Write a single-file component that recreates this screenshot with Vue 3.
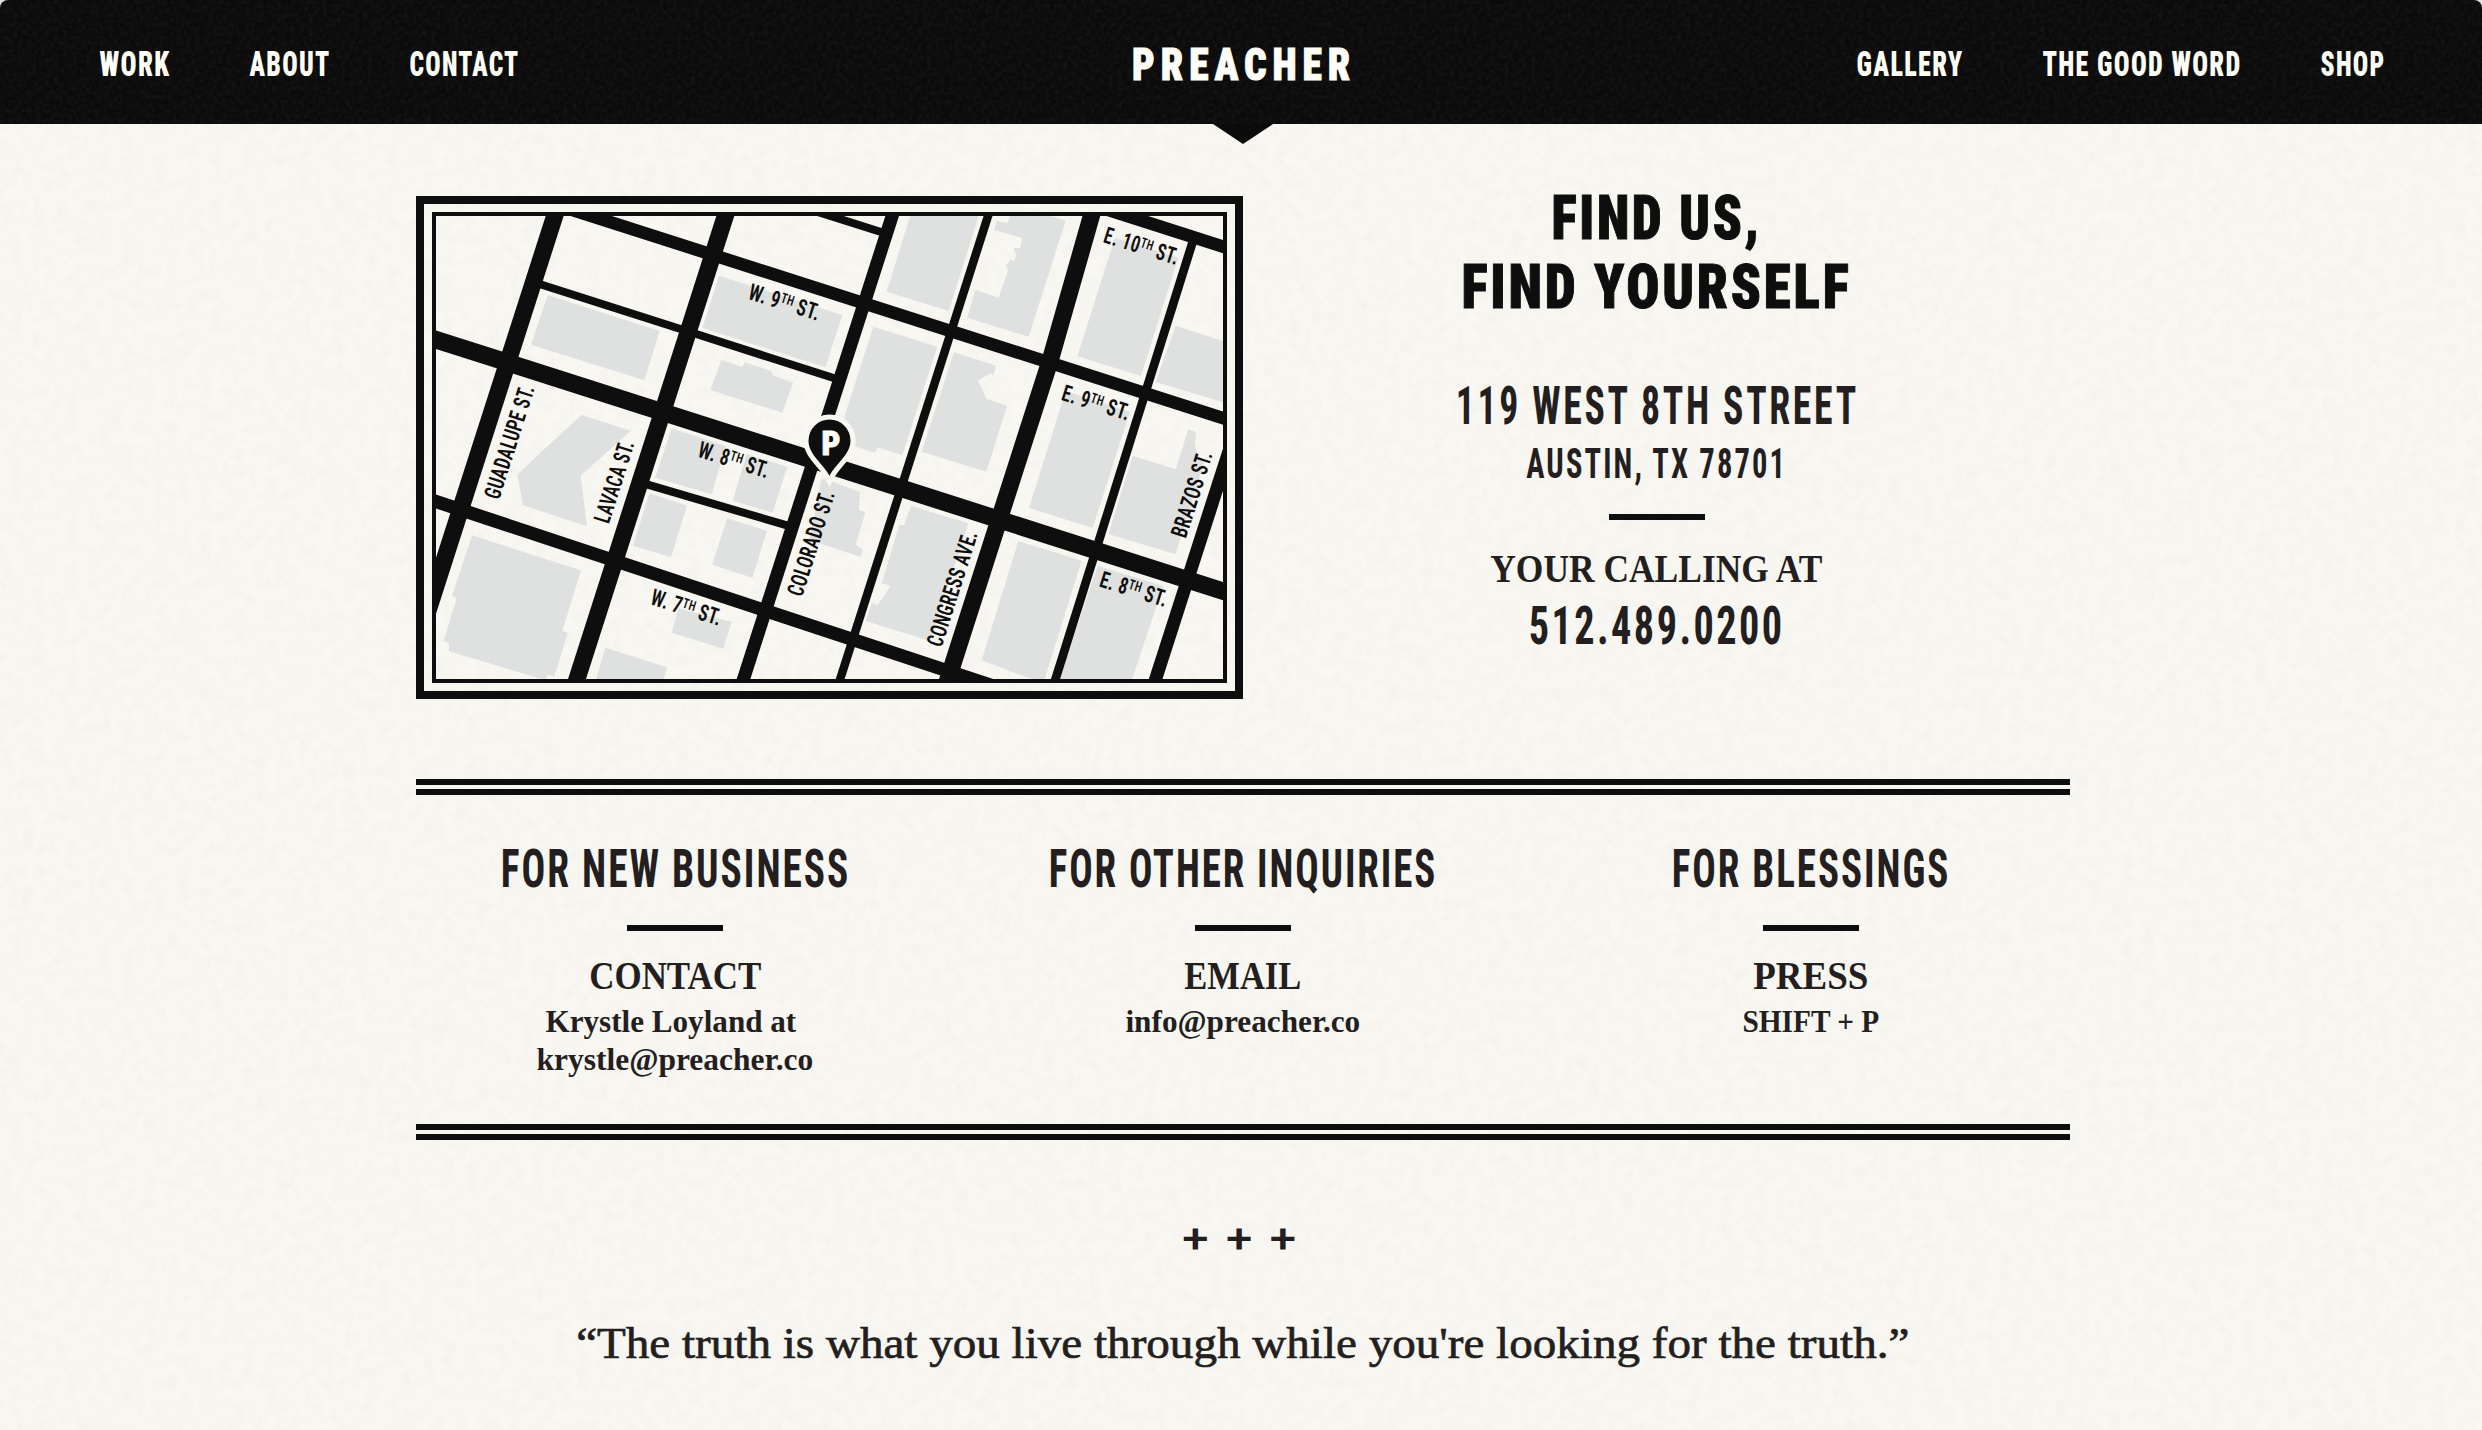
<script setup>
import { h } from 'vue'

// Cap height as a share of the font size, per typeface.
const CAP_RATIO = { cond: 0.711, slab: 0.711, serif: 0.655 }

// One line of type set to an exact measure: `w` wide, `cap` tall.
const TypeLine = ({ text, w, cap, face = 'cond', ls = 0.07 }) => {
  const size = cap / CAP_RATIO[face]
  const bearing = cap * (face === 'serif' ? 0.03 : 0.06)
  return h('svg', { class: ['line', face], width: w, height: cap }, [
    h('text', {
      x: -bearing,
      y: cap,
      'font-size': size,
      'letter-spacing': `${ls}em`,
      textLength: w + bearing * 1.4 + size * ls * 0.5,
      lengthAdjust: 'spacingAndGlyphs',
      'xml:space': 'preserve'
    }, text)
  ])
}
TypeLine.props = ['text', 'w', 'cap', 'face', 'ls']

const navLeft = [
  { text: 'WORK', w: 68 },
  { text: 'ABOUT', w: 78 },
  { text: 'CONTACT', w: 107 }
]
const navRight = [
  { text: 'GALLERY', w: 104 },
  { text: 'THE GOOD WORD', w: 196 },
  { text: 'SHOP', w: 62 }
]

const columns = [
  {
    title: 'FOR NEW BUSINESS', w: 345, label: 'CONTACT', lw: 171,
    lines: [{ text: 'Krystle Loyland at', w: 250, class: 'hang' }, { text: 'krystle@preacher.co', w: 276 }]
  },
  {
    title: 'FOR OTHER INQUIRIES', w: 384, label: 'EMAIL', lw: 116,
    lines: [{ text: 'info@preacher.co', w: 234 }]
  },
  {
    title: 'FOR BLESSINGS', w: 274, label: 'PRESS', lw: 114,
    lines: [{ text: 'SHIFT + P', w: 136 }]
  }
]

const streets = [
  { d: 'M564.3 186L426 617', w: 17.1 },
  { d: 'M734.9 186L567.4 709', w: 17.1 },
  { d: 'M901.8 186L733.9 709', w: 13 },
  { d: 'M997.6 186L830.6 709', w: 8.5 },
  { d: 'M1099.9 186L1050.3 360L938.4 709', w: 17.1 },
  { d: 'M1194.2 237L1046.1 709', w: 8.7 },
  { d: 'M1239.6 418L1146 709', w: 13 },
  { d: 'M406 330.1L1253 600.7', w: 17.6 },
  { d: 'M560 206L1253 427.8', w: 12.6 },
  { d: 'M406 491.6L1022 695.5', w: 13.2 },
  { d: 'M1096 206L1253 256.2', w: 12.7 },
  { d: 'M541 284.5L697 334.3L836 378.8', w: 8 },
  { d: 'M799 206L881 232', w: 8 },
  { d: 'M646 484.2L787 525.4', w: 8 }
]

// Building footprints by map quadrant, drawn at three units to the pixel.
const quadrants = [
  {
    at: 'translate(410 190) scale(.33333)',
    blocks: [
      '413,315 749,423 703,571 363,464',
      '927,257 1297,375 1246,532 877,414',
      '934,511 997,530 1004,517 1085,543 1088,556 1149,579 1117,668 901,600'
    ]
  },
  {
    at: 'translate(830 190) scale(.33333)',
    blocks: [
      '243,70 449,70 356,363 170,305',
      '540,78 533,98 500,92 493,120 577,145 570,175 552,174 552,186 560,190 553,214 542,209 528,226 534,243 506,323 437,299 411,383 596,440 707,92 650,74',
      '855,143 1045,203 933,558 742,499',
      '1037,407 1180,453 1180,637 977,576',
      '130,410 322,470 217,796 143,772 135,788 78,770 60,720 42,683',
      '372,486 498,527 490,557 481,550 444,572 469,626 531,647 469,845 275,785',
      '707,603 900,665 788,1014 597,954'
    ]
  },
  {
    at: 'translate(410 440) scale(.33333)',
    blocks: [
      '515,-75 662,-28 512,107 531,259 339,196 322,104 400,30',
      '785,-35 947,18 905,163 735,113',
      '1010,42 1132,80 1088,218 968,182',
      '718,160 831,197 783,352 669,317',
      '951,235 1071,272 1027,413 907,374',
      '186,286 513,391 457,572 473,580 433,710 415,705 405,720 117,634 117,610 101,603 140,474 126,467',
      '805,505 965,545 940,626 785,578',
      '586,623 772,682 757,730 554,730'
    ]
  },
  {
    at: 'translate(830 440) scale(.33333)',
    blocks: [
      '-25,115 0,122 90,157 87,210 106,217 77,314 98,328 92,350 0,320 -62,300',
      '243,197 415,250 300,603 107,543 125,490 143,495 182,437 155,430 208,254 222,256',
      '565,303 755,362 640,730 455,661',
      '803,377 1000,438 902,730 684,730',
      '908,47 1037,88 1075,-32 1098,-24 1095,15 1102,45 1125,60 1037,343 835,282'
    ]
  }
]

const labels = [
  { x: 1102.3, y: 242, r: 17.4, len: 77.5, pre: 'E. 10', sup: 'TH', post: ' ST.' },
  { x: 1060.3, y: 399.7, r: 17.4, len: 70.5, pre: 'E. 9', sup: 'TH', post: ' ST.' },
  { x: 747, y: 298.7, r: 17.4, len: 74, pre: 'W. 9', sup: 'TH', post: ' ST.' },
  { x: 696.5, y: 456.5, r: 17.4, len: 73.5, pre: 'W. 8', sup: 'TH', post: ' ST.' },
  { x: 649.3, y: 604, r: 17.4, len: 73, pre: 'W. 7', sup: 'TH', post: ' ST.' },
  { x: 1098.3, y: 586.2, r: 17.4, len: 70, pre: 'E. 8', sup: 'TH', post: ' ST.' },
  { x: 499, y: 500.5, r: -72.3, len: 118, pre: 'GUADALUPE ST.' },
  { x: 608.8, y: 524.5, r: -72.3, len: 85, pre: 'LAVACA ST.' },
  { x: 802, y: 597.5, r: -72.3, len: 109, pre: 'COLORADO ST.' },
  { x: 941.5, y: 648, r: -72.3, len: 120, pre: 'CONGRESS AVE.' },
  { x: 1185.8, y: 539, r: -72.3, len: 89, pre: 'BRAZOS ST.' }
]
</script>

<template>
  <div class="page">
    <svg class="grain" aria-hidden="true">
      <filter id="paper" x="0" y="0" width="100%" height="100%">
        <feTurbulence type="fractalNoise" baseFrequency="0.09" numOctaves="4" seed="4" />
        <feColorMatrix values="0 0 0 0 .5  0 0 0 0 .47  0 0 0 0 .42  .13 0 0 0 -.045" />
      </filter>
      <rect width="100%" height="100%" filter="url(#paper)" />
    </svg>

    <header class="bar">
      <svg class="grain" aria-hidden="true">
        <filter id="ink" x="0" y="0" width="100%" height="100%">
          <feTurbulence type="fractalNoise" baseFrequency="0.22" numOctaves="3" seed="9" />
          <feColorMatrix values="0 0 0 0 1  0 0 0 0 1  0 0 0 0 1  .08 0 0 0 -.03" />
        </filter>
        <rect width="100%" height="100%" filter="url(#ink)" />
      </svg>
      <nav class="links">
        <a v-for="item in navLeft" :key="item.text">
          <TypeLine class="nav-type" v-bind="item" :cap="25" :ls="0.05" />
        </a>
      </nav>
      <a class="brand"><TypeLine text="PREACHER" :w="218" :cap="32" face="slab" :ls="0.15" /></a>
      <nav class="links end">
        <a v-for="item in navRight" :key="item.text">
          <TypeLine class="nav-type" v-bind="item" :cap="25" :ls="0.05" />
        </a>
      </nav>
      <i class="notch"></i>
    </header>

    <main class="content">
      <section class="intro">
        <div class="map">
          <svg class="map-art" viewBox="436 216 787 463">
            <g v-for="q in quadrants" :key="q.at" :transform="q.at" class="blocks">
              <polygon v-for="b in q.blocks" :key="b" :points="b" />
            </g>
            <path v-for="s in streets" :key="s.d" class="street" :d="s.d" :stroke-width="s.w" />
            <text
              v-for="l in labels" :key="l.pre" class="label"
              :transform="`translate(${l.x} ${l.y}) rotate(${l.r})`"
              :textLength="l.len" lengthAdjust="spacingAndGlyphs" xml:space="preserve"
            >{{ l.pre }}<tspan v-if="l.sup" class="sup" dy="-6.6">{{ l.sup }}</tspan><tspan v-if="l.post" dy="6.6">{{ l.post }}</tspan></text>
            <path class="pin" d="M829.5 476C823 463 808.5 455 808.5 440.5A21 21 0 0 1 850.5 440.5C850.5 455 836 463 829.5 476Z" />
            <text class="pin-letter" x="821.5" y="454.500" textLength="19" lengthAdjust="spacingAndGlyphs">P</text>
          </svg>
        </div>

        <div class="find">
          <TypeLine text="FIND US," :w="205" :cap="43" face="slab" :ls="0.05" />
          <TypeLine class="find-second" text="FIND YOURSELF" :w="385" :cap="43" face="slab" :ls="0.05" />
          <TypeLine text="119 WEST 8TH STREET" :w="398" :cap="38" :ls="0.07" />
          <TypeLine class="city" text="AUSTIN, TX 78701" :w="257" :cap="30" :ls="0.07" />
          <hr class="dash dash-wide">
          <TypeLine text="YOUR CALLING AT" :w="331" :cap="26" face="serif" :ls="0" />
          <TypeLine class="phone" text="512.489.0200" :w="251" :cap="38" :ls="0.06" />
        </div>
      </section>

      <section class="columns">
        <article v-for="c in columns" :key="c.title" class="column">
          <TypeLine :text="c.title" :w="c.w" :cap="38" :ls="0.05" />
          <hr class="dash">
          <TypeLine :text="c.label" :w="c.lw" :cap="26" face="serif" :ls="0" />
          <div class="details">
            <TypeLine v-for="l in c.lines" :key="l.text" v-bind="l" :cap="20" face="serif" :ls="0" />
          </div>
        </article>
      </section>

      <TypeLine class="pluses" text="+ + +" :w="113" :cap="29" :ls="0.06" />
      <TypeLine
        class="quote" face="serif" :w="1332" :cap="29" :ls="0"
        text="“The truth is what you live through while you're looking for the truth.”"
      />
    </main>
  </div>
</template>

<style>
body {
  margin: 0;
  background: #dde3e6;
}
</style>

<style scoped>
.page {
  position: relative;
  height: 1430px;
  overflow: hidden;
  border-radius: 8px 8px 0 0;
  background: #f9f7f2;
  color: #231f20;
}

.grain {
  position: absolute;
  inset: 0;
  width: 100%;
  height: 100%;
}

.bar {
  position: relative;
  display: grid;
  grid-template-columns: 1fr auto 1fr;
  align-items: center;
  height: 124px;
  padding: 0 98px 0 101px;
  background: #0b0b0b;
  color: #fffdf6;
}

.links {
  position: relative;
  display: flex;
  gap: 82px;
  padding-top: 3px;
}

.links.end {
  justify-content: flex-end;
}

.brand {
  position: relative;
  display: flex;
  padding-top: 4px;
}

.links a {
  display: flex;
}

.notch {
  position: absolute;
  top: 124px;
  left: 50%;
  margin-left: -28px;
  border: solid transparent;
  border-width: 20px 30px 0;
  border-top-color: #0b0b0b;
}

.line {
  display: block;
  flex: none;
  overflow: visible;
  fill: currentColor;
}

.cond {
  font-family: "Roboto Condensed", Roboto, sans-serif;
  font-stretch: 75%;
  font-weight: 750;
}

.nav-type {
  font-weight: 900;
}

.slab {
  font-family: "Roboto Condensed", Roboto, sans-serif;
  font-stretch: 75%;
  font-weight: 900;
  stroke: currentColor;
  stroke-width: 1;
}

.serif {
  font-family: "Liberation Serif", serif;
  font-weight: 700;
}

.content {
  position: relative;
  display: flex;
  flex-direction: column;
  align-items: center;
  width: 1654px;
  margin: 0 auto;
  padding: 72px 0 0 4px;
}

.intro {
  display: flex;
  width: 1654px;
}

.map {
  box-sizing: border-box;
  width: 827px;
  height: 503px;
  padding: 8px;
  border: 8px solid #0e0e0e;
}

.map-art {
  display: block;
  width: 787px;
  height: 463px;
  border: 4px solid #0e0e0e;
}

.blocks {
  fill: #dfe1e0;
}

.street {
  fill: none;
  stroke: #0e0e0e;
}

.label {
  font: 650 23px "Roboto Condensed", Roboto, sans-serif;
  font-stretch: 75%;
  letter-spacing: 0.02em;
  fill: #0e0e0e;
}

.sup {
  font-size: 14px;
}

.pin {
  fill: #0e0e0e;
  stroke: #f9f7f2;
  stroke-width: 10;
  paint-order: stroke;
}

.pin-letter {
  font: 900 34px "Roboto Condensed", Roboto, sans-serif;
  fill: #fffdf6;
  stroke: #fffdf6;
  stroke-width: 0.8;
}

.find {
  display: flex;
  flex-direction: column;
  align-items: center;
  width: 827px;
  color: #231f20;
}

.find .slab {
  color: #0e0e0e;
}

.find-second {
  margin: 26px 0 78px;
}

.city {
  margin-top: 24px;
}

.phone {
  margin-top: 24px;
}

.dash {
  width: 96px;
  height: 6px;
  margin: 38px 0 32px;
  border: 0;
  background: #0e0e0e;
}

.dash-wide {
  margin: 36px 0;
}

.columns {
  display: flex;
  justify-content: space-between;
  box-sizing: border-box;
  width: 1654px;
  height: 361px;
  margin-top: 80px;
  padding-top: 54px;
  border: solid #0e0e0e;
  border-width: 6px 0;
  background:
    linear-gradient(#0e0e0e, #0e0e0e) 0 4px / 100% 6px no-repeat,
    linear-gradient(#0e0e0e, #0e0e0e) 0 calc(100% - 4px) / 100% 6px no-repeat;
}

.column {
  display: flex;
  flex-direction: column;
  align-items: center;
  width: 518px;
  padding-top: 10px;
}

.details {
  display: flex;
  flex-direction: column;
  align-items: center;
  gap: 18px;
  margin-top: 23px;
}

.hang {
  margin-right: 8px;
}

.pluses {
  margin-top: 84px;
  margin-right: 5px;
  font-family: Roboto, sans-serif;
  font-stretch: 100%;
  font-weight: 500;
}

.quote {
  margin-top: 76px;
  font-weight: 400;
  stroke: currentColor;
  stroke-width: 0.7;
}
</style>
